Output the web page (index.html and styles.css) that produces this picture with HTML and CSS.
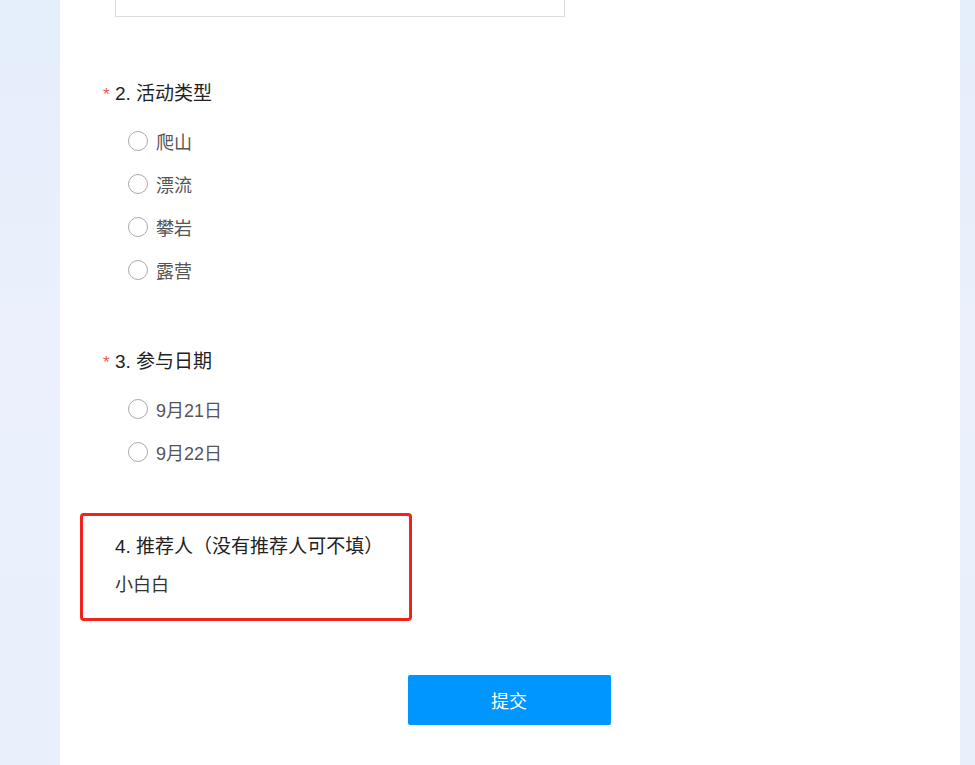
FILE: index.html
```html
<!DOCTYPE html>
<html>
<head>
  <meta charset="utf-8">
  <title>活动报名</title>
  <link rel="stylesheet" href="styles.css">
</head>
<body>
  <div class="page">
    <div class="panel">
      <div class="input-box"></div>

      <div class="question q2">
        <div class="q-title"><span class="req">*</span>2. 活动类型</div>
        <ul class="options">
          <li><span class="radio"></span>爬山</li>
          <li><span class="radio"></span>漂流</li>
          <li><span class="radio"></span>攀岩</li>
          <li><span class="radio"></span>露营</li>
        </ul>
      </div>

      <div class="question q3">
        <div class="q-title"><span class="req">*</span>3. 参与日期</div>
        <ul class="options">
          <li><span class="radio"></span>9月21日</li>
          <li><span class="radio"></span>9月22日</li>
        </ul>
      </div>

      <div class="question q4">
        <div class="q-title">4. 推荐人（没有推荐人可不填）</div>
        <div class="answer">小白白</div>
      </div>

      <div class="actions">
        <button class="submit">提交</button>
      </div>
    </div>
  </div>
</body>
</html>
```

FILE: styles.css
```css
* {
  margin: 0;
  padding: 0;
  box-sizing: border-box;
}
body {
  font-family: "Liberation Sans", "Noto Sans CJK SC", sans-serif;
  background: linear-gradient(180deg, #e5eefb 0%, #ebf0fc 50%, #e9f0fb 100%);
  height: 765px;
  overflow: hidden;
}
.page {
  padding-left: 60px;
}
.panel {
  width: 900px;
  height: 765px;
  background: #fff;
  padding-left: 55px;
}
.input-box {
  width: 450px;
  height: 17px;
  border: 1px solid #ddd;
  border-top: none;
}
.q-title {
  font-size: 19px;
  line-height: 24px;
  color: #222;
}
.req {
  color: #e85a5a;
  font-size: 17px;
  margin-left: -12px;
  display: inline-block;
  width: 12px;
}
.q2 {
  margin-top: 65px;
}
.q3 {
  margin-top: 59px;
}
.options {
  list-style: none;
  margin-top: 12px;
  padding-left: 13px;
}
.options li {
  display: flex;
  align-items: center;
  height: 43px;
  font-size: 18px;
  color: #555;
}
.radio {
  width: 20px;
  height: 20px;
  border: 1px solid #aaa;
  border-radius: 50%;
  margin-right: 8px;
}
.q4 {
  width: 332px;
  margin-top: 40px;
  margin-left: -35px;
  border: 3px solid #f0241c;
  border-radius: 4px;
  padding: 19px 0 21px 32px;
}
.answer {
  margin-top: 14px;
  font-size: 18px;
  line-height: 24px;
  color: #333;
}
.actions {
  width: 788px;
  display: flex;
  justify-content: center;
  margin-top: 54px;
}
.submit {
  width: 203px;
  height: 50px;
  border: none;
  border-radius: 2px;
  background: #0096ff;
  color: #fff;
  font-family: "Liberation Sans", "Noto Sans CJK SC", sans-serif;
  font-size: 18px;
}
```
